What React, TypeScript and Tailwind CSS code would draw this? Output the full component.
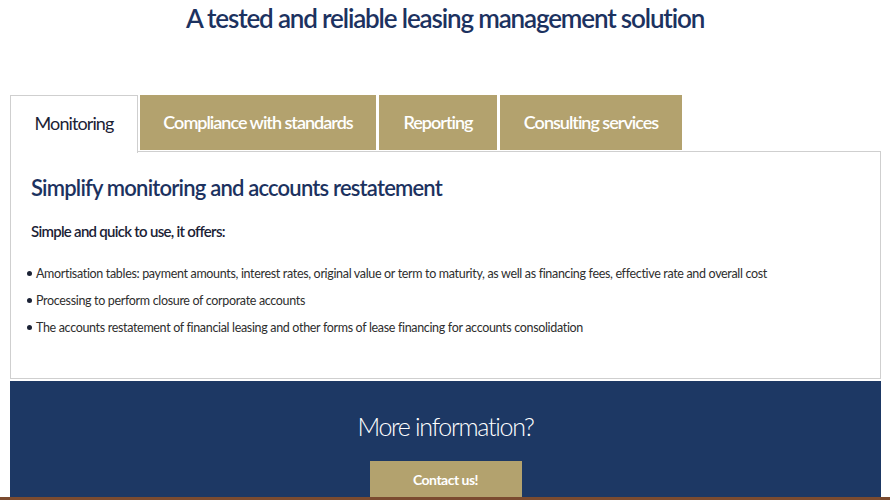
import React from "react";

const items = [
  "Amortisation tables: payment amounts, interest rates, original value or term to maturity, as well as financing fees, effective rate and overall cost",
  "Processing to perform closure of corporate accounts",
  "The accounts restatement of financial leasing and other forms of lease financing for accounts consolidation",
];

const tabs = [
  { label: "Compliance with standards", w: "w-[236px]" },
  { label: "Reporting", w: "w-[118px]" },
  { label: "Consulting services", w: "w-[182px]" },
];

export default function App() {
  return (
    <div
      className="w-[890px] h-[500px] bg-white overflow-hidden relative"
      style={{ fontFamily: "Lato, 'Open Sans', sans-serif" }}
    >
      <h1 className="text-center text-[26px] leading-[36px] font-semibold text-[#1c3260] tracking-[-1.15px]">
        A tested and reliable leasing management solution
      </h1>

      <div className="ml-[10px] w-[871px] mt-[59px]">
        {/* tab bar */}
        <div className="flex items-start h-[57px] relative z-10">
          <div className="w-[128px] h-[58px] bg-white border border-b-0 border-[#cfcfcf] flex items-center justify-center text-[18px] text-[#1b2235] tracking-[-0.9px] pb-[2px]">
            Monitoring
          </div>
          {tabs.map((t, i) => (
            <div
              key={t.label}
              className={`${t.w} h-[55px] bg-[#b3a26e] flex items-center justify-center text-[18px] font-semibold text-white tracking-[-1px] ${
                i === 0 ? "ml-[2px]" : "ml-[3px]"
              }`}
            >
              {t.label}
            </div>
          ))}
        </div>

        {/* panel */}
        <div className="border border-[#cfcfcf] h-[228px] px-[20px] pt-[21px] -mt-px">
          <h2 className="text-[22px] leading-[30px] font-semibold text-[#1c3260] tracking-[-0.8px]">
            Simplify monitoring and accounts restatement
          </h2>
          <p className="mt-[18px] text-[15px] leading-[20px] font-semibold text-[#1b2235] tracking-[-0.72px]">
            Simple and quick to use, it offers:
          </p>
          <ul className="mt-[24px] -ml-[4px] flex flex-col gap-[10px]">
            {items.map((it) => (
              <li key={it} className="flex items-center text-[12.5px] leading-[17px] text-[#2e2e2e] tracking-[-0.33px]">
                <span className="inline-block w-[5px] h-[5px] rounded-full bg-[#1b2235] mr-[4px]" />
                {it}
              </li>
            ))}
          </ul>
        </div>

        {/* call to action */}
        <div className="mt-[2px] h-[116px] bg-[#1d3864] flex flex-col items-center pt-[29px]">
          <div className="text-[25px] leading-[32px] font-light text-white tracking-[-1.3px]">More information?</div>
          <div className="mt-[19px] w-[152px] h-[40px] bg-[#b3a26e] flex items-center justify-center text-[14px] font-bold text-white tracking-[-0.5px]">
            Contact us!
          </div>
        </div>
      </div>

      {/* bottom strip */}
      <div className="absolute left-0 bottom-0 w-full h-[3px] bg-[#7b4b30]" />
    </div>
  );
}
